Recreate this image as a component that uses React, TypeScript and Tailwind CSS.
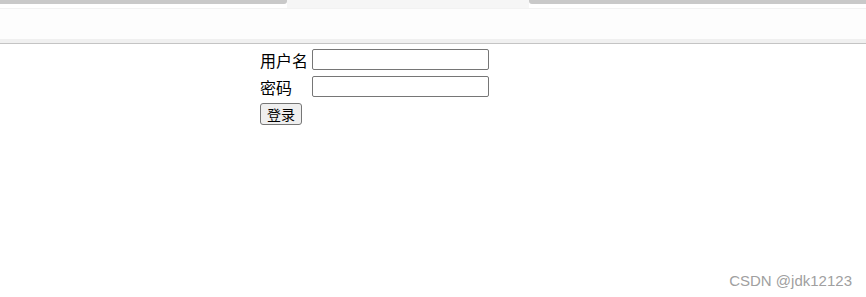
import React from 'react';

const cjk = { fontFamily: '"Microsoft YaHei", "Noto Sans CJK SC", "Noto Sans", sans-serif' };

const App: React.FC = () => {
  return (
    <div className="relative w-[866px] h-[297px] bg-white overflow-hidden flex flex-col">
      {/* browser-ish header strip */}
      <div className="flex flex-col">
        <div className="flex h-[8px]">
          <div className="w-[287px] h-[4px] bg-[#c9c9c9] rounded-br-[3px]" />
          <div className="flex-1 bg-[#f6f6f6]" />
          <div className="w-[337px] h-[4px] bg-[#c9c9c9] rounded-bl-[3px]" />
        </div>
        <div className="h-[1px] bg-[#f2f2f2]" />
        <div className="h-[30px] bg-[#fdfdfd]" />
        <div className="h-[4px] bg-[#f0f0f0]" />
        <div className="h-[1px] bg-[#c4c4c4]" />
      </div>

      {/* login form */}
      <form className="flex flex-col pl-[260px] pt-[5px]" style={cjk}>
        <div className="grid grid-cols-[53px_176px] gap-y-[6px] items-center text-[16px] text-black">
          <label className="leading-none">用户名</label>
          <input className="h-[21px] -ml-[1px] border border-[#767676] rounded-[2px] bg-white" />
          <label className="leading-none">密码</label>
          <input type="password" className="h-[21px] -ml-[1px] border border-[#767676] rounded-[2px] bg-white" />
        </div>
        <div className="mt-[4px]">
          <button
            type="button"
            className="w-[42px] h-[22px] bg-[#efefef] border border-[#767676] rounded-[3px] text-[14px] leading-none text-black"
          >
            登录
          </button>
        </div>
      </form>

      {/* watermark */}
      <div
        className="absolute right-[14px] bottom-[7px] text-[15px] leading-[18px] text-[#a0a0a0]"
        style={{ fontFamily: '"Liberation Sans", Arial, sans-serif' }}
      >
        CSDN @jdk12123
      </div>
    </div>
  );
};

export default App;
